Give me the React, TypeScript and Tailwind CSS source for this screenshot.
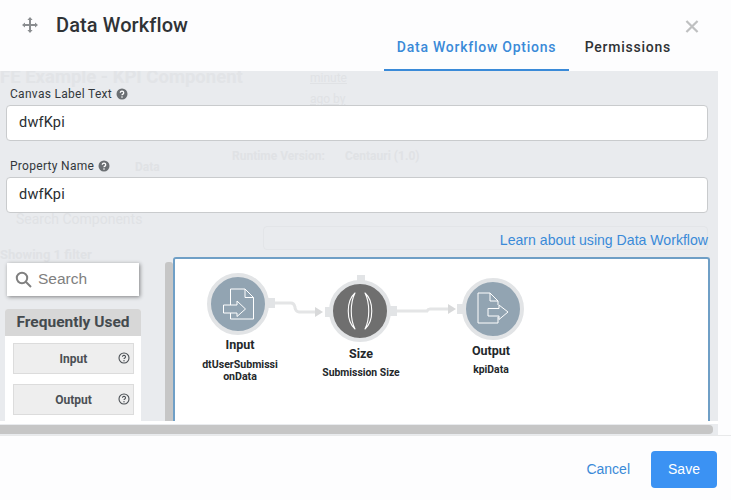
import React from "react";

const roboto = "font-['Roboto',sans-serif]";
const arial = "font-['Liberation_Sans',Arial,sans-serif]";

function HelpDot() {
  return (
    <svg width="12" height="12" viewBox="0 0 12 12" className="inline-block ml-1 -mt-0.5 align-middle">
      <circle cx="6" cy="6" r="5.5" fill="#6b6f73" />
      <path d="M4.3 4.7a1.7 1.6 0 1 1 2.6 1.4c-.6.4-.9.6-.9 1.2" fill="none" stroke="#fff" strokeWidth="1.3" />
      <circle cx="6" cy="9" r=".8" fill="#fff" />
    </svg>
  );
}

function HelpRing() {
  return (
    <svg width="12" height="12" viewBox="0 0 12 12">
      <circle cx="6" cy="6" r="5" fill="none" stroke="#4a4f54" strokeWidth="1.1" />
      <path d="M4.5 4.8a1.5 1.4 0 1 1 2.3 1.2c-.5.3-.8.5-.8 1" fill="none" stroke="#4a4f54" strokeWidth="1.1" />
      <circle cx="6" cy="8.7" r=".7" fill="#4a4f54" />
    </svg>
  );
}

function Field({ label, value }: { label: string; value: string }) {
  return (
    <div className="flex flex-col">
      <div className="h-[23px] pl-1 text-[12px] leading-[25px] tracking-[0.3px] text-[#33383c]">
        {label}
        <HelpDot />
      </div>
      <div className="flex h-[36px] items-center rounded border border-[#c9cbcd] bg-white pl-[12px] text-[14.5px] tracking-[0.2px] text-[#2a2e31]">
        {value}
      </div>
    </div>
  );
}

function PaletteItem({ label }: { label: string }) {
  return (
    <div className="relative flex h-[31px] items-center justify-center border border-[#dcdcdc] bg-[#eeeeee] text-[12px] font-bold text-[#4a4f54]">
      {label}
      <span className="absolute right-[3px] top-[8px] flex">
        <HelpRing />
      </span>
    </div>
  );
}

function InputIcon() {
  return (
    <svg width="38" height="38" viewBox="0 0 38 38" fill="none" stroke="#fff" strokeWidth="1" strokeLinejoin="round">
      <path d="M11.5 20V4H26l8.5 8.5V34H11.5V28" />
      <path d="M26 4v8.5h8.5" />
      <path d="M4.5 20H18v-4l8.5 8-8.5 7.5V28H4.5z" />
    </svg>
  );
}

function OutputIcon() {
  return (
    <svg width="38" height="38" viewBox="0 0 38 38" fill="none" stroke="#fff" strokeWidth="1" strokeLinejoin="round">
      <path d="M24 15V11l-8-8H4v30h20V27" />
      <path d="M16 3v8h8" />
      <path d="M14 18.5h11V15l9 7-9 7.5V26H14z" />
    </svg>
  );
}

function ParenIcon() {
  return (
    <svg width="34" height="40" viewBox="0 0 34 40" fill="none" stroke="#fff" strokeWidth="1.1" strokeLinejoin="round">
      <path d="M12 2C3 10 3 30 12 38 7 28 7 12 12 2z" />
      <path d="M22 2c9 8 9 28 0 36 5-10 5-26 0-36z" />
    </svg>
  );
}

function Node({
  left,
  top,
  color,
  children,
}: {
  left: string;
  top: string;
  color: string;
  children: React.ReactNode;
}) {
  return (
    <div className={`absolute ${left} ${top} flex h-[62px] w-[62px] items-center justify-center rounded-full border-[4px] border-[#e2e4e6] ${color}`}>
      {children}
    </div>
  );
}

export default function App() {
  return (
    <div className={`relative flex h-[500px] w-[731px] flex-col overflow-hidden bg-[#fdfdfe] ${roboto}`}>
      <header className="relative z-10 flex h-[71px] shrink-0 items-start justify-between">
        <div className="flex items-center pl-[22px] pt-[10px]">
          <svg width="16" height="16" viewBox="0 0 16 16" fill="#8a8d90">
            <path d="M8 0l2.6 3H9v4h4V5.4L16 8l-3 2.6V9H9v4h1.6L8 16l-2.6-3H7V9H3v1.6L0 8l3-2.6V7h4V3H5.4z" />
          </svg>
          <span className="ml-[18px] text-[20px] font-medium leading-[30px] tracking-[0.1px] text-[#303336]">Data Workflow</span>
        </div>
        <div className="flex h-full flex-col items-end pr-[33px]">
          <svg width="14" height="14" viewBox="0 0 14 14" className="mr-[-1px] mt-[20px]" stroke="#bfc0c1" strokeWidth="2.4" fill="none">
            <path d="M1 1l12 12M13 1L1 13" />
          </svg>
          <nav className="mr-[27px] mt-[1px] flex text-[14px] font-medium leading-[18px] tracking-[0.75px]">
            <span className="h-[37px] border-b-[2px] border-[#3a8ad8] px-[12.5px] pt-[4px] text-[#3a8ad8]">Data Workflow Options</span>
            <span className="h-[37px] pl-[16px] pt-[4px] text-[#2f3235]">Permissions</span>
          </nav>
        </div>
      </header>

      <main className="relative h-[364px] w-[718px] shrink-0 overflow-hidden bg-[#e9ebee]">
        <div className="absolute left-0 top-[-4px] select-none whitespace-nowrap text-[18.5px] font-bold leading-[20px] text-[#e2e4e7]">FE Example - KPI Component</div>
        <div className="absolute left-[310px] top-[-2px] text-[12px] text-[#e0e2e5] underline">minute</div>
        <div className="absolute left-[310px] top-[19px] text-[12px] text-[#e0e2e5] underline">ago by</div>
        <div className="absolute left-[232px] top-[76px] text-[12px] font-bold text-[#e0e2e5]">Runtime Version:</div>
        <div className="absolute left-[345px] top-[76px] text-[12px] font-bold text-[#e0e2e5]">Centauri (1.0)</div>
        <div className="absolute left-[135px] top-[87px] text-[12px] font-bold text-[#e0e2e5]">Data</div>
        <div className="absolute left-[16px] top-[138px] text-[14px] text-[#e0e2e5]">Search Components</div>
        <div className="absolute left-0 top-[174px] text-[13px] font-bold text-[#e0e2e5]">Showing 1 filter</div>
        <div className="absolute left-[263px] top-[155px] h-[24px] w-[445px] rounded border border-[#e3e5e8]" />

        <div className="relative flex flex-col pl-[6px] pr-[10px] pt-[11px]">
          <Field label="Canvas Label Text" value="dwfKpi" />
          <div className="h-[13px]" />
          <Field label="Property Name" value="dwfKpi" />
          <div className={`flex h-[44px] items-end justify-end pb-[8px] text-[14.1px] leading-[18px] text-[#3a8ad8] ${arial}`}>
            Learn about using Data Workflow
          </div>
        </div>

        <div className="relative flex h-[164px] pr-[8px]">
          <div className="flex w-[165px] shrink-0 flex-col overflow-hidden pl-[5px] pt-[6px]">
            <div className="ml-[2px] flex h-[33px] w-[132px] items-center bg-white pl-[8px] text-[#808080] shadow-[1px_1px_4px_rgba(0,0,0,0.45)]">
              <svg width="17" height="17" viewBox="0 0 17 17" fill="none" stroke="#808080" strokeWidth="2">
                <circle cx="7" cy="7" r="5.2" />
                <path d="M11 11l5 5" />
              </svg>
              <span className={`ml-[6px] pb-[1px] text-[15.5px] ${arial}`}>Search</span>
            </div>
            <div className="mt-[13px] w-[136px] flex-1 rounded-t-[3px] bg-white">
              <div className="flex h-[27px] items-center justify-center rounded-t-[3px] bg-[#d7d7d7] pt-[1px] text-[15.5px] font-bold text-[#444a4e]">
                Frequently Used
              </div>
              <div className="flex flex-col gap-[10px] pl-[8px] pr-[7px] pt-[7px]">
                <PaletteItem label="Input" />
                <PaletteItem label="Output" />
              </div>
            </div>
          </div>
          <div className="mt-[5px] h-[159px] w-[8px] shrink-0 rounded-t-[3px] bg-[#c6c6c6]" />
          <div className="relative flex-1 rounded-t-[3px] border-2 border-b-0 border-[#6f9fc6] bg-white">
            <svg className="absolute left-0 top-0" width="360" height="100" fill="none">
              <path d="M98 44h18q3 0 4 4v1q1 4 4 4h18" stroke="#e4e5e6" strokeWidth="3" />
              <path d="M140 48l8 5-8 5z" fill="#d8d9da" />
              <rect x="93" y="39" width="7" height="10" fill="#e2e4e6" />
              <rect x="150" y="48" width="5" height="10" fill="#e2e4e6" />
              <rect x="182" y="16" width="8" height="6" fill="#e2e4e6" />
              <path d="M220 52h32q1-2 3-2h20" stroke="#e4e5e6" strokeWidth="3" />
              <path d="M273 45l8 5-8 5z" fill="#d8d9da" />
              <rect x="215" y="47" width="7" height="10" fill="#e2e4e6" />
              <rect x="282" y="45" width="6" height="10" fill="#e2e4e6" />
            </svg>
            <Node left="left-[32px]" top="top-[14px]" color="bg-[#92a4b2]">
              <InputIcon />
            </Node>
            <Node left="left-[154px]" top="top-[21px]" color="bg-[#6f6f6f]">
              <ParenIcon />
            </Node>
            <Node left="left-[287px]" top="top-[19px]" color="bg-[#92a4b2]">
              <OutputIcon />
            </Node>
            <div className="absolute left-[19px] top-[78px] w-[92px] text-center font-bold text-[#24282b]">
              <div className="text-[12.5px] leading-[15px]">Input</div>
              <div className="mt-[7px] text-[10.6px] leading-[12px]">dtUserSubmissi<br />onData</div>
            </div>
            <div className="absolute left-[140px] top-[87px] w-[92px] text-center font-bold text-[#24282b]">
              <div className="text-[12.5px] leading-[15px]">Size</div>
              <div className="mt-[6px] whitespace-nowrap text-[10.4px] leading-[12px]">Submission Size</div>
            </div>
            <div className="absolute left-[270px] top-[84px] w-[92px] text-center font-bold text-[#24282b]">
              <div className="text-[12.5px] leading-[15px]">Output</div>
              <div className="mt-[6px] text-[10.4px] leading-[12px]">kpiData</div>
            </div>
          </div>
        </div>

        <div className="h-[3px] bg-white" />
        <div className="mt-[1px] h-[9px] w-[713px] rounded-r-[4px] bg-[#c6c6c6]" />
      </main>

      <footer className="flex flex-1 items-center justify-end border-t border-[#e8e9ea] pr-[14px] pt-[3px]">
        <span className={`text-[14px] text-[#3a8ad8] ${arial}`}>Cancel</span>
        <button className={`ml-[21px] h-[37px] w-[66px] rounded-[4px] bg-[#3b92f3] text-[14px] text-white ${arial}`}>Save</button>
      </footer>
    </div>
  );
}
